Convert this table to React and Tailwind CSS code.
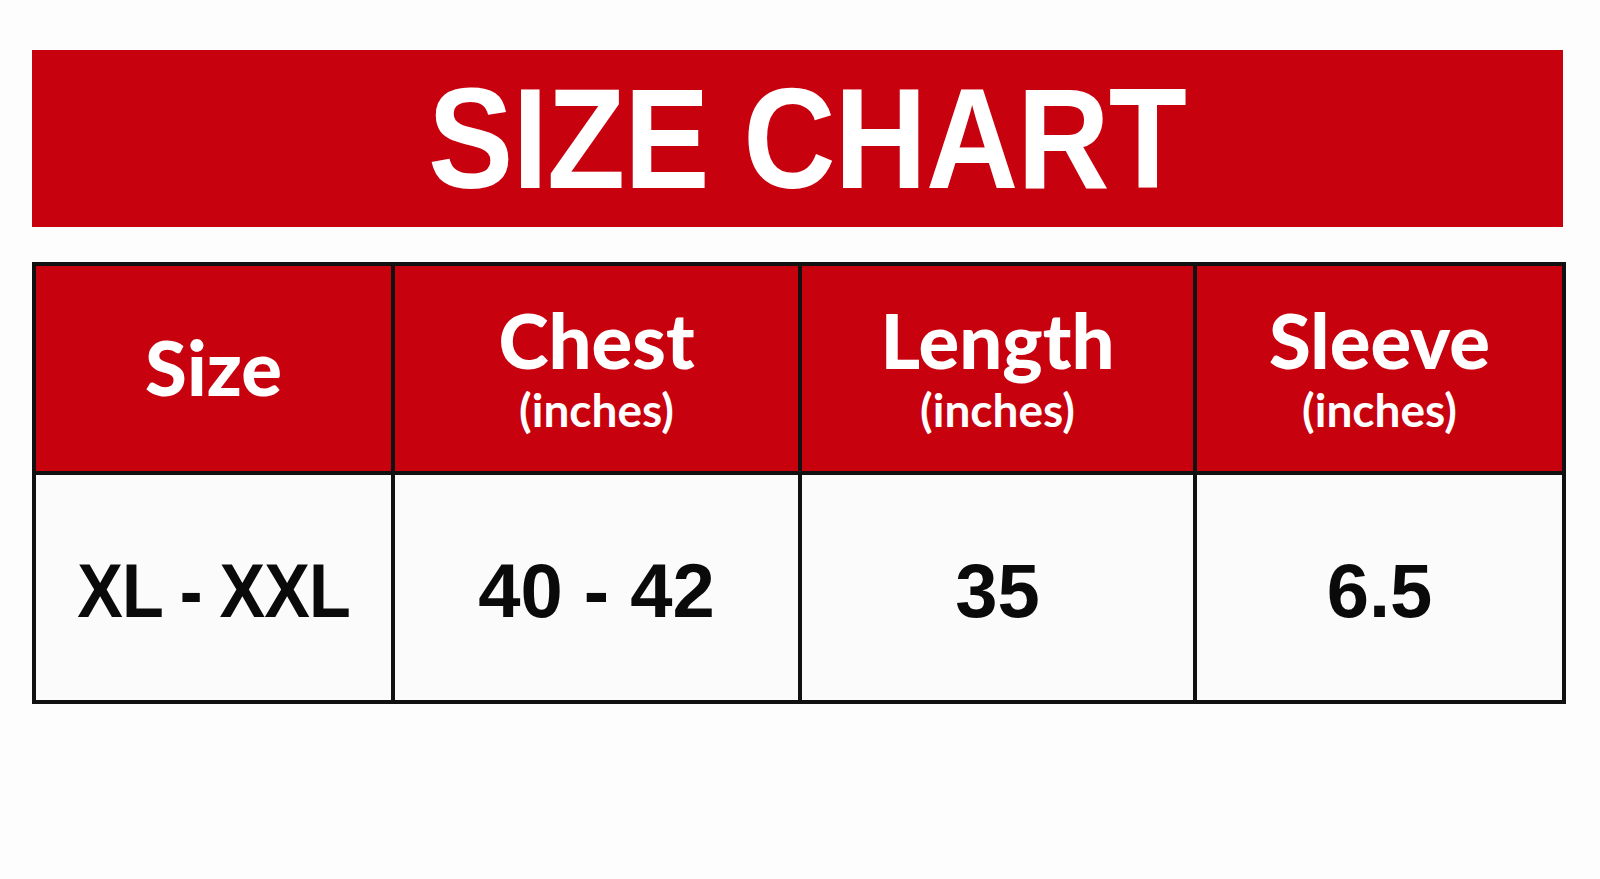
import React from 'react';

const RED = 'bg-[#c8010f]';

const headers = [
  { title: 'Size' },
  { title: 'Chest', sub: '(inches)' },
  { title: 'Length', sub: '(inches)' },
  { title: 'Sleeve', sub: '(inches)' },
];

const values = ['XL - XXL', '40 - 42', '35', '6.5'];

// right border on every column except the last
const colBorder = ['border-r-4', 'border-r-4', 'border-r-4', ''];

export default function App() {
  return (
    <div className="min-h-screen w-full bg-[#fdfdfd] pt-[50px] pl-[32px]">
      {/* banner */}
      <div className={`${RED} w-[1531px] h-[177px] flex items-center justify-center`}>
        <span
          className="block scale-x-90 text-white text-[142px] leading-none font-bold tracking-[-1px] pl-[20px]"
          style={{ fontFamily: '"Liberation Sans", Arial, sans-serif' }}
        >
          SIZE CHART
        </span>
      </div>

      {/* table */}
      <div className="mt-[35px] w-[1534px] border-4 border-[#111] grid grid-cols-[359px_407px_395px_365px]">
        {headers.map((h, i) => (
          <div
            key={h.title}
            className={`${RED} ${colBorder[i]} border-b-4 border-[#111] h-[209px] flex flex-col items-center justify-center text-white pb-[4px]`}
            style={{ fontFamily: 'Lato, "Noto Sans", sans-serif' }}
          >
            <span className="text-[76px] leading-[1.15] font-black">{h.title}</span>
            {h.sub && (
              <span className="text-[46px] leading-[1.15] font-bold">{h.sub}</span>
            )}
          </div>
        ))}
        {values.map((v, i) => (
          <div
            key={v}
            className={`bg-[#fbfbfb] ${colBorder[i]} border-[#111] h-[225px] flex items-center justify-center text-[#0a0a0a] pt-[6px]`}
            style={{ fontFamily: '"Liberation Sans", Arial, sans-serif' }}
          >
            <span className={`text-[76px] leading-none font-bold ${i === 0 ? 'scale-x-90 tracking-[-1px]' : ''}`}>
              {v}
            </span>
          </div>
        ))}
      </div>
    </div>
  );
}
